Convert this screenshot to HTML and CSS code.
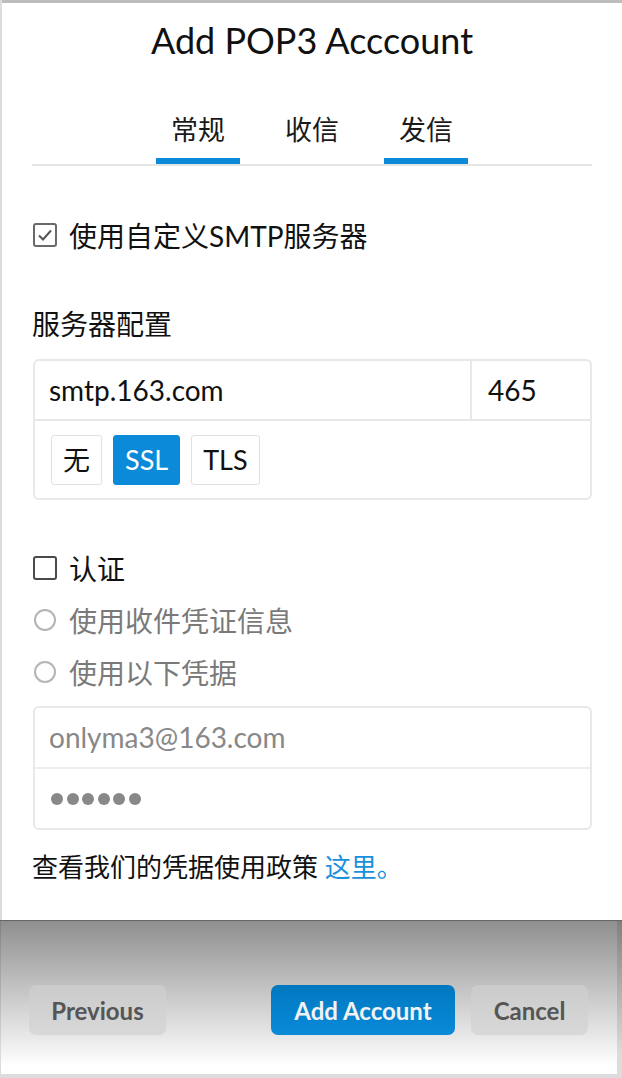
FILE: index.html
```html
<!DOCTYPE html>
<html lang="zh-CN">
<head>
    <meta charset="UTF-8">
    <meta name="viewport" content="width=device-width, initial-scale=1.0">
    <title>Add POP3 Acccount</title>
    <link rel="stylesheet" href="styles.css">
</head>
<body>
    <div class="window">
        <h1 class="title">Add POP3 Acccount</h1>

        <div class="tabs">
            <div class="tab active">常规</div>
            <div class="tab">收信</div>
            <div class="tab active">发信</div>
        </div>

        <label class="check-row custom-smtp">
            <span class="checkbox checked">
                <svg width="16" height="14" viewBox="0 0 16 14"><path d="M2 7.5 L6 11.5 L14 2.5" fill="none" stroke="#555" stroke-width="2"/></svg>
            </span>
            使用自定义SMTP服务器
        </label>

        <div class="section-label">服务器配置</div>
        <div class="field-box">
            <div class="field-row">
                <div class="field host">smtp.163.com</div>
                <div class="field port">465</div>
            </div>
            <div class="security">
                <div class="sec-btn">无</div>
                <div class="sec-btn selected">SSL</div>
                <div class="sec-btn">TLS</div>
            </div>
        </div>

        <div class="auth">
            <label class="check-row">
                <span class="checkbox"></span>
                认证
            </label>
            <label class="radio-row">
                <span class="radio"></span>
                使用收件凭证信息
            </label>
            <label class="radio-row">
                <span class="radio"></span>
                使用以下凭据
            </label>
        </div>

        <div class="field-box creds">
            <div class="field placeholder">onlyma3@163.com</div>
            <div class="field password">
                <span class="dot"></span><span class="dot"></span><span class="dot"></span><span class="dot"></span><span class="dot"></span><span class="dot"></span>
            </div>
        </div>

        <p class="policy">查看我们的凭据使用政策 <a href="#">这里。</a></p>
    </div>

    <div class="footer">
        <div class="footer-inner">
            <button class="btn btn-prev">Previous</button>
            <button class="btn btn-primary">Add Account</button>
            <button class="btn btn-cancel">Cancel</button>
        </div>
    </div>
</body>
</html>
```

FILE: styles.css
```css
* {
    margin: 0;
    padding: 0;
    box-sizing: border-box;
}

body {
    font-family: Lato, "Noto Sans CJK SC", sans-serif;
    background-color: #dcdcdc;
    color: #111;
    width: 622px;
    height: 1078px;
    overflow: hidden;
}

.window {
    height: 920px;
    margin-left: 2px;
    padding: 0 30px;
    background-color: #fff;
    border-top: 3px solid #bdbdbd;
}

.title {
    padding-top: 15px;
    font-size: 36px;
    font-weight: 400;
    line-height: 44px;
    text-align: center;
}

/* tabs */
.tabs {
    display: flex;
    justify-content: center;
    gap: 30px;
    margin-top: 48px;
    border-bottom: 2px solid #e6e6e6;
}

.tab {
    width: 84px;
    font-size: 27px;
    line-height: 40px;
    text-align: center;
    padding-bottom: 8px;
    border-bottom: 6px solid transparent;
    color: #1a1a1a;
}

.tab.active {
    border-bottom-color: #0a8ad8;
}

/* checkbox / radio rows */
.check-row,
.radio-row {
    display: flex;
    align-items: center;
    gap: 12px;
    font-size: 28px;
    height: 52px;
}

.custom-smtp {
    margin-top: 43px;
}

.checkbox {
    width: 24px;
    height: 24px;
    margin-left: 1px;
    border: 2px solid #4a4a4a;
    border-radius: 3px;
    display: flex;
    align-items: center;
    justify-content: center;
}

.checkbox.checked {
    border-color: #6a6a6a;
}

.radio-row {
    color: #7a7a7a;
}

.radio {
    width: 22px;
    height: 22px;
    margin: 0 1px 0 2px;
    border: 2px solid #b4b4b4;
    border-radius: 50%;
}

.section-label {
    margin-top: 43px;
    font-size: 28px;
    line-height: 40px;
}

/* grouped inputs */
.field-box {
    margin-top: 15px;
    border: 2px solid #e8e8e8;
    border-radius: 6px;
    margin-left: 1px;
}

.field-row {
    display: flex;
    border-bottom: 2px solid #e8e8e8;
}

.field {
    font-size: 28px;
    height: 58px;
    line-height: 58px;
    padding-left: 14px;
}

.host {
    flex: 1;
    border-right: 2px solid #e8e8e8;
}

.port {
    width: 118px;
    padding-left: 16px;
}

.security {
    display: flex;
    gap: 11px;
    padding: 14px 16px 13px;
}

.sec-btn {
    height: 50px;
    line-height: 48px;
    padding: 0 11px;
    font-size: 27px;
    border: 1px solid #e0e0e0;
    border-radius: 3px;
}

.sec-btn.selected {
    background-color: #0a8ad8;
    border-color: #0a8ad8;
    color: #fff;
}

.auth {
    margin-top: 42px;
}

.creds {
    margin-top: 8px;
}

.creds .field {
    height: 59px;
    line-height: 59px;
}

.creds .placeholder {
    height: 61px;
}

.placeholder {
    color: #888;
    border-bottom: 2px solid #eee;
}

.password {
    display: flex;
    align-items: center;
    gap: 3.6px;
    padding-left: 16px;
}

.dot {
    width: 12px;
    height: 12px;
    border-radius: 50%;
    background-color: #888;
}

.policy {
    margin-top: 17px;
    font-size: 26px;
    line-height: 40px;
}

.policy a {
    color: #1a8fdb;
    text-decoration: none;
}

/* footer */
.footer {
    height: 158px;
    padding: 0 5px 4px 1px;
    border-top: 1px solid #666;
    background: linear-gradient(rgba(0, 0, 0, 0.42), rgba(0, 0, 0, 0) 85%), #dcdcdc;
}

.footer-inner {
    height: 100%;
    display: flex;
    align-items: flex-start;
    gap: 16px;
    padding: 64px 29px 0 28px;
    background: linear-gradient(rgba(0, 0, 0, 0.44), rgba(0, 0, 0, 0) 95%), #fff;
}

.btn {
    height: 50px;
    padding: 0 22px;
    font-family: Lato, sans-serif;
    font-size: 24px;
    font-weight: 700;
    color: #555;
    background: linear-gradient(#cbcbcb, #d8d8d8);
    border: none;
    border-radius: 7px;
}

.btn-prev {
    width: 137px;
    margin-right: auto;
}

.btn-primary {
    width: 184px;
    color: #f2f2f2;
    background: linear-gradient(#0078c0, #0a8ad8);
}

.btn-cancel {
    width: 117px;
}
```
